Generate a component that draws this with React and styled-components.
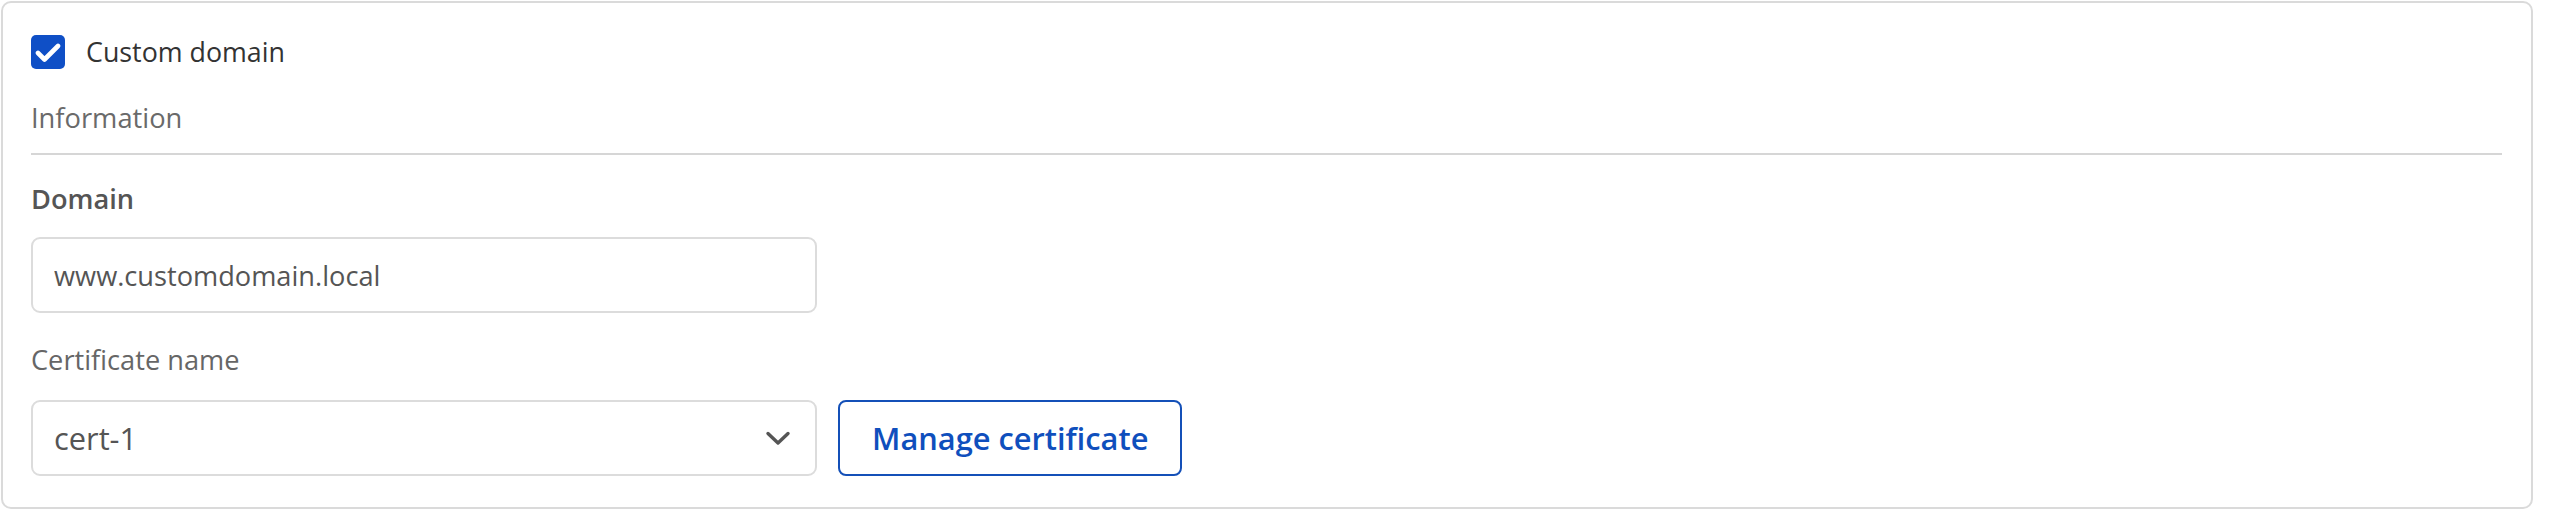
import React from "react";
import styled, { createGlobalStyle } from "styled-components";

const Global = createGlobalStyle`
  html, body { margin: 0; padding: 0; background: #ffffff; }
  body { font-family: "Open Sans", "Noto Sans", sans-serif; }
  * { box-sizing: border-box; }
`;

const Card = styled.section`
  margin: 1px 0 0 1px;
  width: 2532px;
  height: 508px;
  border: 2px solid #dadada;
  border-radius: 10px;
  padding: 31px 29px 28px 28px;
  display: flex;
  flex-direction: column;
  background: #fff;
`;

const CheckRow = styled.label`
  display: flex;
  align-items: center;
  gap: 21px;
  height: 36px;
  font-size: 26.8px;
  line-height: 36px;
  color: #333;
  cursor: pointer;
`;

const Box = styled.span`
  width: 34px;
  height: 34px;
  border-radius: 5px;
  background: #0f4fc6;
  display: flex;
  align-items: center;
  justify-content: center;
  flex-shrink: 0;
`;

const SectionTitle = styled.div`
  margin-top: 30px;
  font-size: 27.3px;
  line-height: 36px;
  color: #6a6a6a;
`;

const Divider = styled.hr`
  margin: 17px 0 0 0;
  border: none;
  height: 2px;
  background: #d6d6d6;
`;

const FieldLabel = styled.div`
  margin-top: ${(p) => p.$top}px;
  font-size: 27.2px;
  line-height: 36px;
  font-weight: ${(p) => (p.$strong ? 600 : 400)};
  color: ${(p) => (p.$strong ? "#555" : "#666")};
`;

const Row = styled.div`
  margin-top: ${(p) => p.$top}px;
  display: flex;
  align-items: stretch;
  gap: 21px;
`;

const TextInput = styled.input`
  width: 786px;
  height: 76px;
  border: 2px solid #dcdcdc;
  border-radius: 9px;
  padding: 0 20px 0 21px;
  font-family: "Open Sans", "Noto Sans", sans-serif;
  font-size: 27.2px;
  color: #555;
  background: #fff;
  outline: none;
`;

const Select = styled.div`
  width: 786px;
  height: 76px;
  border: 2px solid #dcdcdc;
  border-radius: 9px;
  padding: 0 24px 0 21px;
  display: flex;
  align-items: center;
  justify-content: space-between;
  font-size: 30.8px;
  color: #555;
  background: #fff;
`;

const OutlineButton = styled.button`
  height: 76px;
  padding: 0 32px;
  border: 2px solid #1450b8;
  border-radius: 8px;
  background: #fff;
  color: #0f4fbd;
  font-family: "Open Sans", "Noto Sans", sans-serif;
  font-size: 30.8px;
  font-weight: 600;
  cursor: pointer;
`;

const Check = () => (
  <svg width="26" height="21" viewBox="0 0 26 21" fill="none">
    <path d="M3 11l6.5 6.5L23 4" stroke="#fff" strokeWidth="4.6" strokeLinecap="round" strokeLinejoin="round" />
  </svg>
);

const Chevron = () => (
  <svg width="26" height="16" viewBox="0 0 26 16" fill="none">
    <path d="M3 3.5l10 9.5 10-9.5" stroke="#555" strokeWidth="3.4" strokeLinecap="round" strokeLinejoin="round" />
  </svg>
);

export default function App() {
  return (
    <>
      <Global />
      <Card>
        <CheckRow>
          <Box>
            <Check />
          </Box>
          Custom domain
        </CheckRow>
        <SectionTitle>Information</SectionTitle>
        <Divider />
        <FieldLabel $top={26} $strong>Domain</FieldLabel>
        <Row $top={20}>
          <TextInput readOnly value="www.customdomain.local" />
        </Row>
        <FieldLabel $top={29}>Certificate name</FieldLabel>
        <Row $top={22}>
          <Select>
            <span>cert-1</span>
            <Chevron />
          </Select>
          <OutlineButton>Manage certificate</OutlineButton>
        </Row>
      </Card>
    </>
  );
}
